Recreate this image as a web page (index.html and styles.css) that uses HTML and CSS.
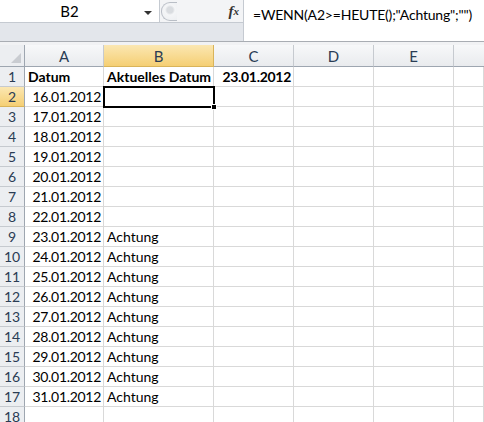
FILE: index.html
```html
<!DOCTYPE html>
<html>
<head>
<meta charset="utf-8">
<link rel="stylesheet" href="styles.css">
</head>
<body>
<div class="app">
  <div class="topbar">
    <div class="left">
      <div class="namerow">
        <div class="namebox"><span class="ref">B2</span><span class="arrow"></span></div>
        <div class="grip"><span class="knob"></span></div>
        <div class="fx">f<span>x</span></div>
      </div>
      <div class="under"></div>
    </div>
    <div class="formula">=WENN(A2&gt;=HEUTE();"Achtung";"")</div>
  </div>
  <div class="sep"></div>
  <div class="grid" id="grid">
    <div class="hd corner"><svg width="10" height="10" viewBox="0 0 10 10"><polygon points="10,0 10,10 0,10" fill="#c9ccd1"/></svg></div>
    <div class="hd col">A</div>
    <div class="hd col sel">B</div>
    <div class="hd col">C</div>
    <div class="hd col">D</div>
    <div class="hd col">E</div>
    <div class="hd col last"></div>

    <div class="hd row">1</div><div class="c b">Datum</div><div class="c b">Aktuelles Datum</div><div class="c b r d">23.01.2012</div><div class="c"></div><div class="c"></div><div class="c"></div>
    <div class="hd row sel">2</div><div class="c r d">16.01.2012</div><div class="c active"><span class="handle"></span></div><div class="c"></div><div class="c"></div><div class="c"></div><div class="c"></div>
    <div class="hd row">3</div><div class="c r d">17.01.2012</div><div class="c"></div><div class="c"></div><div class="c"></div><div class="c"></div><div class="c"></div>
    <div class="hd row">4</div><div class="c r d">18.01.2012</div><div class="c"></div><div class="c"></div><div class="c"></div><div class="c"></div><div class="c"></div>
    <div class="hd row">5</div><div class="c r d">19.01.2012</div><div class="c"></div><div class="c"></div><div class="c"></div><div class="c"></div><div class="c"></div>
    <div class="hd row">6</div><div class="c r d">20.01.2012</div><div class="c"></div><div class="c"></div><div class="c"></div><div class="c"></div><div class="c"></div>
    <div class="hd row">7</div><div class="c r d">21.01.2012</div><div class="c"></div><div class="c"></div><div class="c"></div><div class="c"></div><div class="c"></div>
    <div class="hd row">8</div><div class="c r d">22.01.2012</div><div class="c"></div><div class="c"></div><div class="c"></div><div class="c"></div><div class="c"></div>
    <div class="hd row">9</div><div class="c r d">23.01.2012</div><div class="c">Achtung</div><div class="c"></div><div class="c"></div><div class="c"></div><div class="c"></div>
    <div class="hd row">10</div><div class="c r d">24.01.2012</div><div class="c">Achtung</div><div class="c"></div><div class="c"></div><div class="c"></div><div class="c"></div>
    <div class="hd row">11</div><div class="c r d">25.01.2012</div><div class="c">Achtung</div><div class="c"></div><div class="c"></div><div class="c"></div><div class="c"></div>
    <div class="hd row">12</div><div class="c r d">26.01.2012</div><div class="c">Achtung</div><div class="c"></div><div class="c"></div><div class="c"></div><div class="c"></div>
    <div class="hd row">13</div><div class="c r d">27.01.2012</div><div class="c">Achtung</div><div class="c"></div><div class="c"></div><div class="c"></div><div class="c"></div>
    <div class="hd row">14</div><div class="c r d">28.01.2012</div><div class="c">Achtung</div><div class="c"></div><div class="c"></div><div class="c"></div><div class="c"></div>
    <div class="hd row">15</div><div class="c r d">29.01.2012</div><div class="c">Achtung</div><div class="c"></div><div class="c"></div><div class="c"></div><div class="c"></div>
    <div class="hd row">16</div><div class="c r d">30.01.2012</div><div class="c">Achtung</div><div class="c"></div><div class="c"></div><div class="c"></div><div class="c"></div>
    <div class="hd row">17</div><div class="c r d">31.01.2012</div><div class="c">Achtung</div><div class="c"></div><div class="c"></div><div class="c"></div><div class="c"></div>
    <div class="hd row">18</div><div class="c"></div><div class="c"></div><div class="c"></div><div class="c"></div><div class="c"></div><div class="c"></div>
  </div>
</div>
</body>
</html>
```

FILE: styles.css
```css
* { box-sizing: border-box; }
html, body { margin: 0; padding: 0; }
body {
  width: 484px;
  height: 422px;
  overflow: hidden;
  background: #fff;
  font-family: Lato, "Liberation Sans", sans-serif;
  font-size: 14px;
  color: #000;
}
.app { width: 484px; height: 422px; overflow: hidden; }

.topbar { display: flex; height: 42px; background: #e3e6eb; border-bottom: 1px solid #a9adb3; }
.left { flex: none; width: 243px; display: flex; flex-direction: column; }
.namerow { height: 23px; display: flex; align-items: stretch; background: #f3f4f6; border-bottom: 1px solid #c5cad1; }
.namebox {
  width: 160px; background: #fff; position: relative;
  display: flex; align-items: center; justify-content: center;
  border-right: 1px solid #c5cad1;
}
.namebox .ref { margin-right: 20px; color: #000; font-size: 15px; }
.namebox .arrow {
  position: absolute; right: 7px; top: 11px;
  border-left: 4px solid transparent; border-right: 4px solid transparent;
  border-top: 4px solid #333;
}
.grip { width: 20px; position: relative; }
.grip .knob {
  position: absolute; left: 1px; top: 2px; width: 16px; height: 19px;
  border-radius: 9px 0 0 9px; border: 1px solid #b9bec6; border-right: none;
  background: radial-gradient(circle at 8px 7px, #d9dce0 0 3px, #f4f5f7 5px, #eceef1 100%);
}
.fx {
  flex: 1; display: flex; align-items: center; justify-content: flex-end; padding-right: 5px;
  font-family: "Liberation Serif", serif; font-style: italic; font-weight: bold; font-size: 15px; color: #333;
  letter-spacing: -1px;
}
.fx span { font-size: 11px; margin-left: 1px; }
.under { flex: 1; background: #e3e6eb; }
.formula {
  flex: 1; min-width: 0; background: #fff; border-left: 1px solid #c5cad1;
  padding: 6px 0 0 9px; white-space: nowrap; font-size: 14px; letter-spacing: -0.2px;
}
.sep { height: 3px; background: #f1f2f4; }

.grid {
  display: grid;
  grid-template-columns: 25px 79px 110px 80px 80px 80px 1fr;
  grid-template-rows: 22px repeat(18, 20px);
}
.hd {
  background: linear-gradient(#f7f8f9, #e9ebee);
  border-right: 1px solid #c6cacf;
  border-bottom: 1px solid #c6cacf;
  color: #2a3c54;
  display: flex; align-items: center; justify-content: center;
  font-size: 15px;
}
.hd.col { padding-top: 1px; border-bottom: 1px solid #9ea6b0; }
.hd.row { background: #eceef1; border-right: 1px solid #9ea6b0; font-size: 14px; }
.hd.sel { background: linear-gradient(#fbe7b2, #f5cf74); border-color: #d9b45a; }
.hd.row.sel { border-right: 1px solid #9ea6b0; }
.hd.corner { background: #eceef1; justify-content: flex-end; align-items: flex-end; padding: 0 3px 3px 0; border-bottom: 1px solid #9ea6b0; border-right: 1px solid #9ea6b0; }
.hd.last { border-right: none; }
.c {
  border-right: 1px solid #d9d9d9;
  border-bottom: 1px solid #d9d9d9;
  padding: 0 2px 0 3px;
  display: flex; align-items: center;
  white-space: nowrap; overflow: visible;
  position: relative;
}
.c.r { justify-content: flex-end; }
.c.d { letter-spacing: -0.3px; }
.c.b { font-weight: bold; }
.c.active { outline: 2px solid #000; outline-offset: -1px; z-index: 2; }
.handle {
  position: absolute; right: -4px; bottom: -4px; width: 6px; height: 6px;
  background: #000; border: 1px solid #fff; z-index: 3;
}
```
